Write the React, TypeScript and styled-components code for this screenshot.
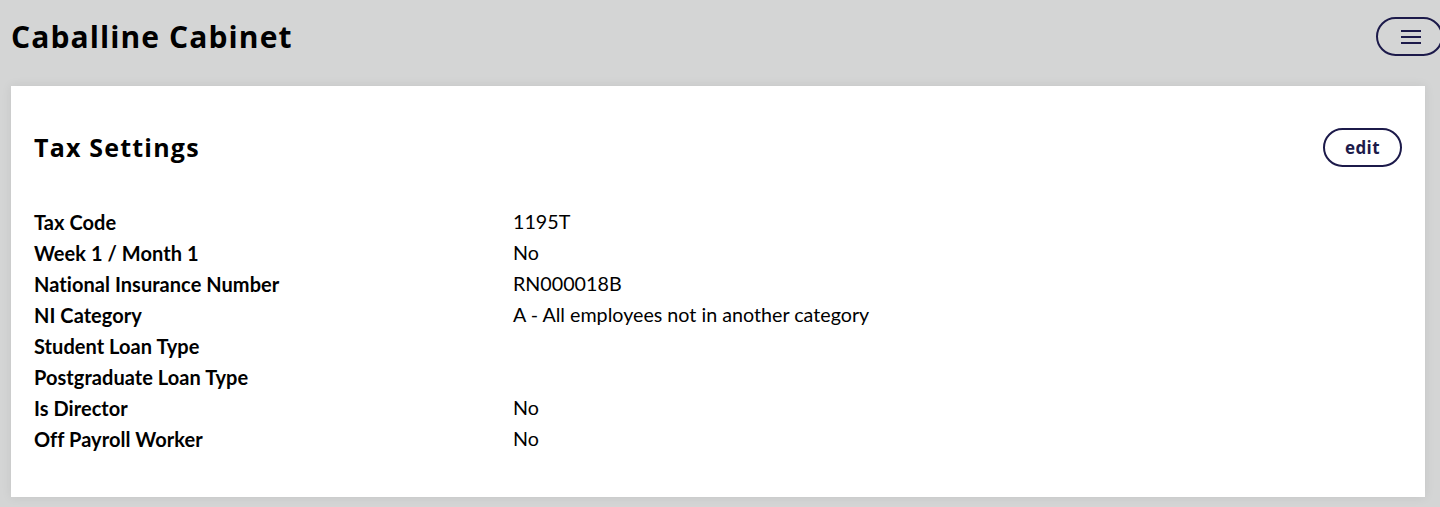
import React from "react";
import styled, { createGlobalStyle } from "styled-components";

const GlobalStyle = createGlobalStyle`
  html, body {
    margin: 0;
    padding: 0;
    background: #d4d5d5;
    overflow: hidden;
  }
  body {
    font-family: Lato, "Liberation Sans", sans-serif;
    color: #000;
  }
`;

const navy = "#1c1a4a";

const rows: { label: string; value: string }[] = [
  { label: "Tax Code", value: "1195T" },
  { label: "Week 1 / Month 1", value: "No" },
  { label: "National Insurance Number", value: "RN000018B" },
  { label: "NI Category", value: "A - All employees not in another category" },
  { label: "Student Loan Type", value: "" },
  { label: "Postgraduate Loan Type", value: "" },
  { label: "Is Director", value: "No" },
  { label: "Off Payroll Worker", value: "No" },
];

const App: React.FC = () => {
  return (
    <>
      <GlobalStyle />
      <Page>
        <Header>
          <Brand>Caballine Cabinet</Brand>
          <MenuButton aria-label="menu">
            <svg width="20" height="14" viewBox="0 0 20 14">
              <path d="M0 1h20M0 7h20M0 13h20" stroke={navy} strokeWidth="2" />
            </svg>
          </MenuButton>
        </Header>
        <Card>
          <CardHead>
            <CardTitle>Tax Settings</CardTitle>
            <PillButton>edit</PillButton>
          </CardHead>
          <DetailList>
            {rows.map((r) => (
              <React.Fragment key={r.label}>
                <Label>{r.label}</Label>
                <Value>{r.value}</Value>
              </React.Fragment>
            ))}
          </DetailList>
        </Card>
      </Page>
    </>
  );
};

export default App;

const Page = styled.div`
  width: 1440px;
  min-height: 507px;
  padding: 0 0 0 11px;
  box-sizing: border-box;
`;

const Header = styled.header`
  height: 86px;
  display: flex;
  align-items: flex-start;
  justify-content: space-between;
`;

const Brand = styled.h1`
  margin: 15px 0 0;
  font-family: "Open Sans", "Noto Sans", sans-serif;
  font-weight: 700;
  font-size: 30px;
  line-height: 44px;
  letter-spacing: 1.1px;
  color: #000;
`;

const MenuButton = styled.button`
  margin: 17px -3px 0 0;
  width: 67px;
  height: 39px;
  border: 2px solid ${navy};
  border-radius: 20px;
  background: transparent;
  display: flex;
  align-items: center;
  justify-content: center;
  padding: 0 0 0 2px;
  cursor: pointer;
`;

const Card = styled.section`
  width: 1414px;
  height: 411px;
  box-sizing: border-box;
  background: #fff;
  box-shadow: 0 0 10px rgba(0, 0, 0, 0.08);
  padding: 42px 23px 0;
`;

const CardHead = styled.div`
  display: flex;
  align-items: center;
  justify-content: space-between;
  height: 39px;
  margin-bottom: 39px;
`;

const CardTitle = styled.h2`
  margin: 0;
  font-family: "Open Sans", "Noto Sans", sans-serif;
  font-weight: 700;
  font-size: 25px;
  line-height: 39px;
  letter-spacing: 1.2px;
`;

const PillButton = styled.button`
  width: 79px;
  height: 39px;
  border: 2px solid ${navy};
  border-radius: 20px;
  background: #fff;
  color: ${navy};
  font-family: "Open Sans", "Noto Sans", sans-serif;
  font-weight: 700;
  font-size: 17px;
  letter-spacing: 0.4px;
  padding: 0;
  cursor: pointer;
`;

const DetailList = styled.div`
  display: grid;
  grid-template-columns: 479px 1fr;
  grid-auto-rows: 31px;
  align-items: center;
`;

const Label = styled.div`
  font-weight: 700;
  font-size: 20px;
  letter-spacing: 0.05px;
`;

const Value = styled.div`
  font-weight: 400;
  font-size: 19.7px;
`;
